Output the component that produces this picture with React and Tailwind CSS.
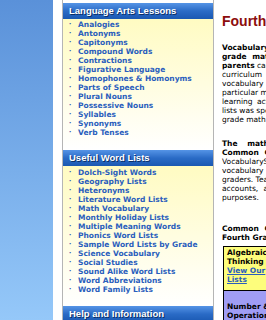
import React from "react";

const lessons = [
  "Analogies",
  "Antonyms",
  "Capitonyms",
  "Compound Words",
  "Contractions",
  "Figurative Language",
  "Homophones & Homonyms",
  "Parts of Speech",
  "Plural Nouns",
  "Possessive Nouns",
  "Syllables",
  "Synonyms",
  "Verb Tenses",
];

const wordLists = [
  "Dolch-Sight Words",
  "Geography Lists",
  "Heteronyms",
  "Literature Word Lists",
  "Math Vocabulary",
  "Monthly Holiday Lists",
  "Multiple Meaning Words",
  "Phonics Word Lists",
  "Sample Word Lists by Grade",
  "Science Vocabulary",
  "Social Studies",
  "Sound Alike Word Lists",
  "Word Abbreviations",
  "Word Family Lists",
];

function BoxHeader({ title }) {
  return (
    <div className="h-[16px] flex items-center pl-[6px] bg-gradient-to-b from-[#5594e6] via-[#2a6bc6] to-[#1a58b2] text-white font-bold text-[9.5px] [font-family:'Liberation_Sans',Arial,sans-serif] [text-shadow:1px_1px_0_#0b2f66] whitespace-nowrap">
      {title}
    </div>
  );
}

function LinkList({ items }) {
  return (
    <ul>
      {items.map((item) => (
        <li key={item} className="flex h-[9px] items-center leading-[9px] whitespace-nowrap">
          <span className="w-[15px] pl-[6px] text-[6px] text-[#3060b0]">•</span>
          <a className="text-[7.5px] font-bold text-[#2a5ebd] [font-family:'DejaVu_Sans',Verdana,sans-serif]">
            {item}
          </a>
        </li>
      ))}
    </ul>
  );
}

// one line of the (justified) body copy; only its start shows in the window
function Line({ children, bold, gap }) {
  return (
    <div
      className={
        "h-[9px] leading-[9px] whitespace-nowrap " +
        (bold ? "font-bold " : "") +
        (gap || "")
      }
    >
      {children}
    </div>
  );
}

export default function App() {
  return (
    <div className="w-[266px] h-[320px] overflow-hidden flex bg-white">
      <div className="w-[53px] shrink-0 bg-gradient-to-b from-[#5a91d9] to-[#95c8f9]" />
      <div className="w-[9px] shrink-0" />
      <aside className="w-[152px] shrink-0 border-x border-[#b5b5b5] pt-[3px]">
        <BoxHeader title="Language Arts Lessons" />
        <div className="pt-[1px] pb-[13px] bg-gradient-to-b from-[#fffbc2] via-[#fffde0] to-white">
          <LinkList items={lessons} />
        </div>
        <BoxHeader title="Useful Word Lists" />
        <div className="pt-[2px] pb-[12px] bg-gradient-to-b from-[#fffbc2] via-[#fffde0] to-white">
          <LinkList items={wordLists} />
        </div>
        <BoxHeader title="Help and Information" />
      </aside>
      <main className="w-[200px] shrink-0 pl-[8px] text-[7.5px] text-black [font-family:'DejaVu_Sans',Verdana,sans-serif]">
        <h1 className="mt-[13px] text-[14px] leading-[16px] font-bold text-[#8c0d0d] whitespace-nowrap [font-family:'Liberation_Sans',Arial,sans-serif]">
          Fourth Grade Math Vocabulary
        </h1>
        <div className="mt-[14px]">
          <Line bold>VocabularySpellingCity's fourth</Line>
          <Line bold gap="[word-spacing:3px]">grade math vocabulary lists</Line>
          <Line><b>parents</b> can use these lists with</Line>
          <Line gap="[word-spacing:4px]">curriculum to teach the math</Line>
          <Line gap="[word-spacing:4px]">vocabulary students need for</Line>
          <Line>particular math topics through</Line>
          <Line gap="[word-spacing:2px]">learning activities. Each of</Line>
          <Line>lists was specifically chosen</Line>
          <Line>grade math curriculum.</Line>
        </div>
        <div className="mt-[15px]">
          <Line bold gap="[word-spacing:7px]">The math vocabulary lists</Line>
          <Line bold gap="[word-spacing:3px]">Common Core Standards.</Line>
          <Line>VocabularySpellingCity offers</Line>
          <Line gap="[word-spacing:4px]">vocabulary lists for fourth</Line>
          <Line>graders. Teachers can use</Line>
          <Line gap="[word-spacing:3px]">accounts, and other</Line>
          <Line>purposes.</Line>
        </div>
        <div className="mt-[22px] font-bold">
          <Line gap="[word-spacing:3px]">Common Core Standards for</Line>
          <Line>Fourth Grade Math</Line>
        </div>
        <div className="mt-[4px] ml-[1px] border border-black w-[180px]">
          <div className="h-[44px] bg-[#fdfd7c] border-b border-black px-[3px] pt-[1px] font-bold leading-[9px]">
            <div>Algebraic</div>
            <div>Thinking</div>
            <a className="text-[#2a5ebd] underline">
              View Our
              <br />
              Lists
            </a>
          </div>
          <div className="h-[40px] bg-[#a09df5] px-[3px] pt-[11px] font-bold leading-[9px]">
            <div>Number &amp;</div>
            <div>Operations</div>
          </div>
        </div>
      </main>
    </div>
  );
}
